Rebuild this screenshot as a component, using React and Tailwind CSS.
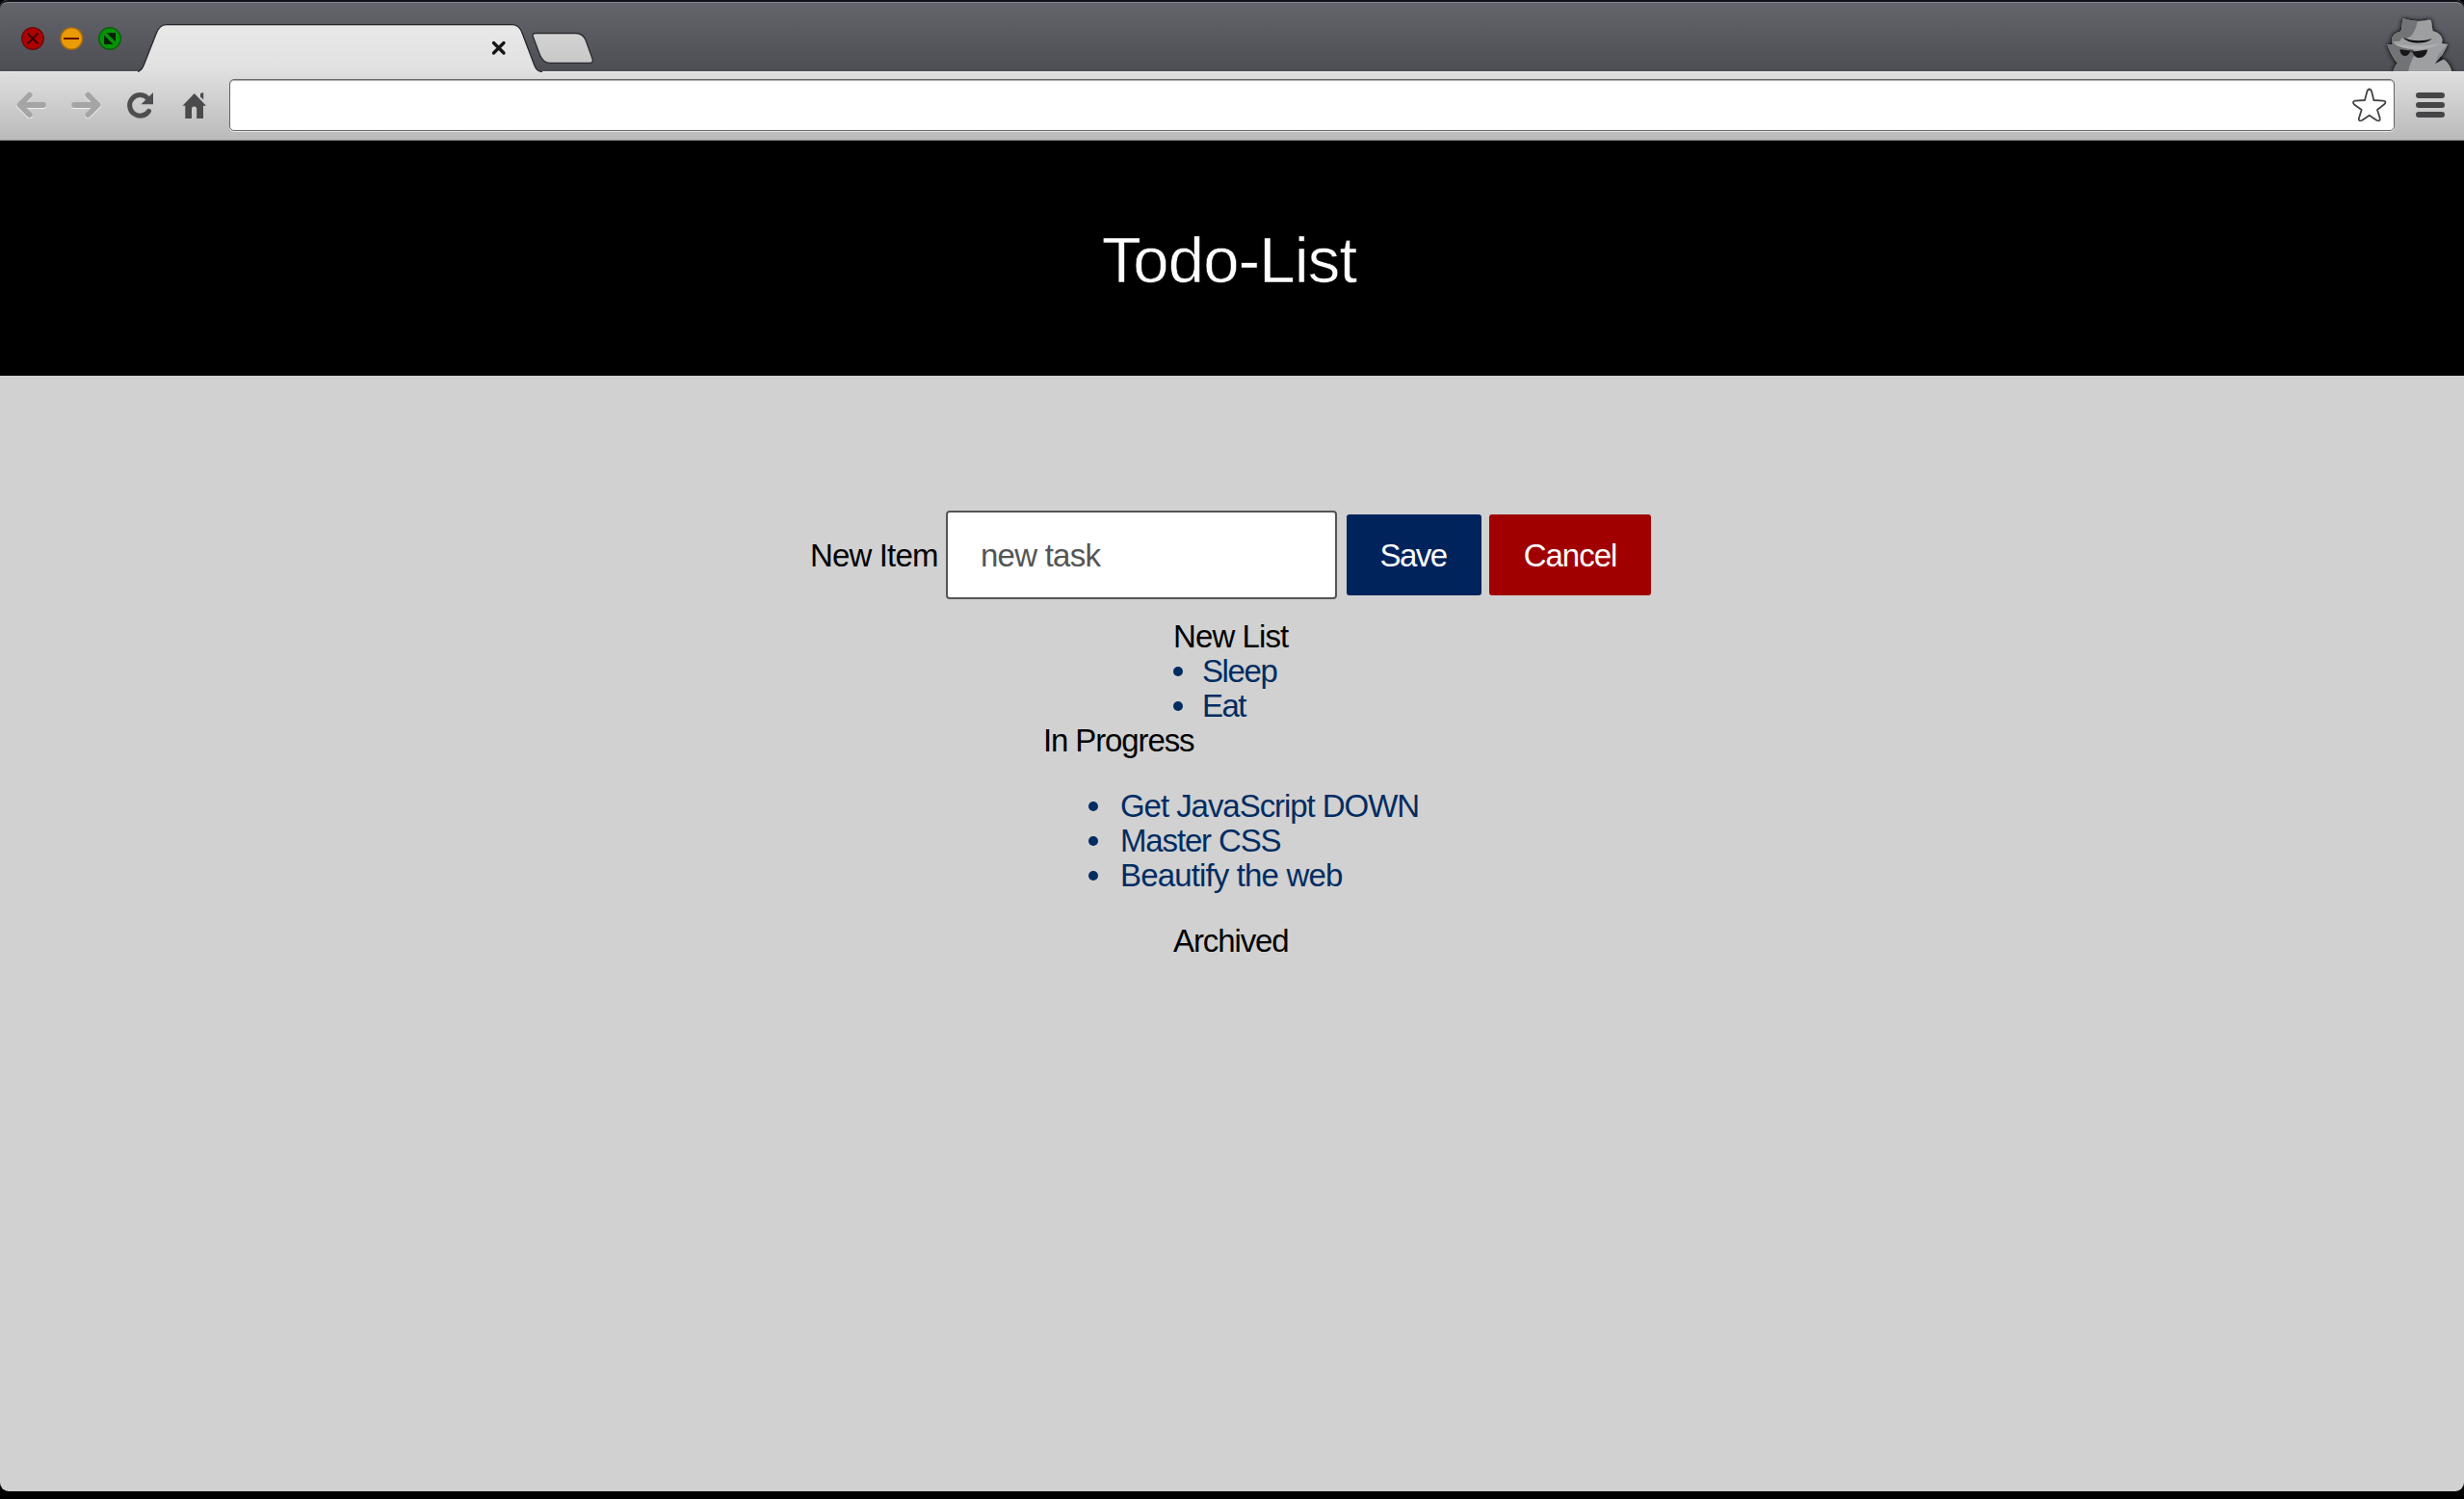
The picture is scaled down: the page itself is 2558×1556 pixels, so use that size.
import React from "react";

function WindowButtons() {
  return (
    <svg className="ml-5 mt-[26px] h-7 w-[110px] shrink-0" viewBox="20 26 110 28" fill="none">
      <circle cx="34" cy="40" r="11.3" fill="#ae0200" stroke="#700909" strokeWidth="1.4" />
      <path d="M28.5 34.5l11 11m0-11l-11 11" stroke="#390000" strokeWidth="2" />
      <circle cx="74.3" cy="40" r="11.3" fill="#e99b08" stroke="#a96c0e" strokeWidth="1.4" />
      <path d="M66 40h16" stroke="#691100" strokeWidth="2" />
      <circle cx="114" cy="40" r="11.3" fill="#079307" stroke="#0a5f0a" strokeWidth="1.4" />
      <path d="M110.5 34H120v9.5zM108 36.5V46h9.5z" fill="#002200" />
    </svg>
  );
}

function Tab() {
  return (
    <div className="relative h-[74px] w-[420px] shrink-0">
      <svg className="absolute left-0 top-0 h-[75px] w-[420px]" viewBox="143 0 420 75">
        <defs>
          <linearGradient id="tab" x1="0" y1="0" x2="0" y2="1">
            <stop offset="0" stopColor="#e9e9e9" />
            <stop offset="1" stopColor="#e0e0e0" />
          </linearGradient>
        </defs>
        <path
          d="M142 74.600C146.500 74 148 71 149.500 67L162.500 34C165 28 167.500 25.600 172.500 25.600H532C537.500 25.600 540 28.500 542 34L554.500 67C556 71 557.500 74 563 74.600V77H142Z"
          fill="url(#tab)"
          stroke="#26272b"
          strokeWidth="1.3"
        />
        <path d="M152 74.500H554" stroke="#e0e0e0" strokeWidth="2" />
        <path d="M512.500 44.500l10.500 10.500m0-10.500l-10.500 10.500" stroke="#161616" strokeWidth="3.300" strokeLinecap="round" />
      </svg>
    </div>
  );
}

function NewTab() {
  return (
    <svg className="-ml-[11px] mt-[33px] h-[34px] w-[66px] shrink-0" viewBox="552 33 66 34">
      <defs>
        <linearGradient id="newtab" x1="0" y1="0" x2="0" y2="1">
          <stop offset="0" stopColor="#d3d3d3" />
          <stop offset="1" stopColor="#c8c8c8" />
        </linearGradient>
      </defs>
      <path
        d="M556 34.500H598C603 34.500 606 37 608 41.500L615 61C616 64 615 65.400 612 65.400H571C566 65.400 562.500 62 560.500 57L553.500 38.500C552.600 36 553 34.500 556 34.500Z"
        fill="url(#newtab)"
        stroke="#2a2b2e"
        strokeWidth="1.300"
      />
    </svg>
  );
}

function Incognito() {
  return (
    <svg className="ml-auto mr-[4px] mt-[10px] h-16 w-[84px] shrink-0" viewBox="2470 10 84 64">
      <defs>
        <filter id="glow" x="-20%" y="-20%" width="140%" height="140%">
          <feDropShadow dx="0" dy="0" stdDeviation="1" floodColor="#000" floodOpacity="0.8" />
          <feDropShadow dx="0" dy="0" stdDeviation="2.6" floodColor="#000" floodOpacity="0.9" />
        </filter>
      </defs>
      <g filter="url(#glow)">
        <path
          d="M2494.300 20.500Q2494.500 19.200 2496 19.500C2505 22.500 2514 22.500 2521.500 20.500Q2523.700 20 2524 21.500L2525.500 32C2533 34 2537 39 2535 45L2541 46C2538 53 2534 60 2528 66L2536.500 61.500C2541 64 2544.500 69 2546 77H2484C2485 71.500 2487 67.500 2489 65.500C2485 61 2481 54 2478.300 46.300L2484 46C2481 40 2485 34 2492.700 32.500Z"
          fill="#9e9fa1"
        />
      </g>
      <path
        d="M2494.300 20.500Q2494.500 19.200 2496 19.500C2501 21 2505 22 2509.500 22C2508.500 29 2506 34 2503 37.500L2498 40L2494 38.500L2491 43H2484.500C2486 48 2496 50.500 2505 51L2507 56C2504 62 2501 68 2500 75H2484C2485 71 2487 67.500 2489 65.500C2485 61 2481 54 2478.300 46.300L2484 46C2481 40 2485 34 2492.700 32.500Z"
        fill="#727376"
      />
      <path d="M2484 44.500C2497 53.500 2521 53.500 2535 44.500C2526 48 2495 49 2484 44.500Z" fill="#aeafb1" />
      <path d="M2494 38.700C2504 43 2515 43.300 2525 40C2518 46.500 2501 46 2494 38.700Z" fill="#0e0e10" />
      <path d="M2491.500 51C2495 52 2499 52.500 2502.500 52C2501.500 56 2499.500 58 2496.500 58C2493.500 58 2491.500 55 2491.500 51ZM2504 53C2509 53.500 2514 52.500 2520 51.500C2519.500 57 2516 60 2511.500 60C2508 60 2505.500 57.500 2504 53Z" fill="#171719" />
      <path d="M2501 52L2506 52.500L2505 54.500L2502 54Z" fill="#3c3c3f" />
      <path d="M2541 46C2538 53 2534 60 2528 66L2531 57Z" fill="#8b8c8f" />
      <path d="M2534 58.500L2528 66L2536.500 61.500Z" fill="#1c1c1f" />
    </svg>
  );
}

function TabStrip() {
  return (
    <div className="flex h-[74px] items-start rounded-t-[8px] bg-linear-to-b from-[#65666d] to-[#4d4e54] shadow-[inset_0_2px_0_#10131b,inset_0_3px_0_#85868b]">
      <WindowButtons />
      <div className="w-[13px] shrink-0" />
      <Tab />
      <NewTab />
      <Incognito />
    </div>
  );
}

function Arrow({ className, edge }) {
  return (
    <svg className={className} viewBox="0 0 32 28" fill="none">
      <path d="M28 14H4M13.700 3.700L3.500 14L13.700 24.300" transform={edge} stroke="#ededed" strokeWidth="6" strokeLinecap="round" />
      <path d="M28 14H4.500M13.700 3.700L3.500 14L13.700 24.300" stroke="#a5a5a6" strokeWidth="5.800" strokeLinecap="round" strokeLinejoin="round" />
    </svg>
  );
}

function Toolbar() {
  return (
    <div className="flex h-[72px] items-center bg-linear-to-b from-[#dfdfdf] to-[#bababa] pb-[2px] shadow-[inset_0_1px_0_#eeeeee,inset_0_-1px_0_#8b8b8b]">
      <Arrow className="ml-[17px] h-7 w-8 shrink-0" edge="translate(0 1)" />
      <Arrow className="ml-6 h-7 w-8 shrink-0 rotate-180" edge="translate(0 -1)" />
      <svg className="ml-[25px] h-[30px] w-[32px] shrink-0" viewBox="130 94 32 30" fill="none">
        <path d="M154.500 115.300A10.800 10.800 0 1 1 153.500 102.200" stroke="#4e4e50" strokeWidth="5" strokeLinecap="round" />
        <path d="M159 96V108.200H146.500Z" fill="#4e4e50" />
      </svg>
      <svg className="ml-[25px] h-[30px] w-[30px] shrink-0" viewBox="187 94 30 30">
        <path d="M201.800 97L214 109.700H211V123H204.200V113.500Q204.200 110.500 201.500 110.500Q199 110.500 199 113.500V123H192.300V109.700H189.500Z" fill="#4b4b4d" />
        <path d="M208 97L211.200 96V103.500L208 100.200Z" fill="#4b4b4d" />
      </svg>
      <div className="ml-[21px] flex h-[54px] flex-1 items-center justify-end rounded-[5px] border border-[#68686a] bg-white pr-[6px] shadow-[inset_0_1px_1px_#a5a5a5,0_1px_0_#e8e8e8]">
        <svg className="h-9 w-[38px]" viewBox="2441 90 38 36" fill="white">
          <path
            d="M2457.500 93.500Q2459.700 89.500 2462 93.500L2464.300 103L2474 103.600Q2478 104.200 2475.500 107L2468 113L2470.700 121.500Q2471.200 125.500 2467.500 124L2459.700 118.800L2452 124Q2448 125.500 2449 121.500L2451.700 113L2444 107.500Q2441.500 104.200 2445 103.600L2455 103Z"
            stroke="#444447"
            strokeWidth="1.800"
            strokeLinejoin="round"
          />
        </svg>
      </div>
      <div className="ml-[22px] mr-5 flex w-[30px] shrink-0 flex-col gap-1">
        <div className="h-[6px] rounded-full bg-[#464648]" />
        <div className="h-[6px] rounded-full bg-[#464648]" />
        <div className="h-[6px] rounded-full bg-[#464648]" />
      </div>
    </div>
  );
}

function Item({ bullet, children, className }) {
  return (
    <li className="flex items-center text-[#002c62]">
      <span className={bullet} />
      <span className={className}>{children}</span>
    </li>
  );
}

export default function App() {
  return (
    <div className="flex h-[1556px] w-[2558px] flex-col overflow-hidden bg-black font-['Liberation_Sans',sans-serif] text-[33px] leading-9 whitespace-nowrap text-black">
      <TabStrip />
      <Toolbar />
      <header className="flex h-[244px] items-start justify-center bg-black pt-[86px]">
        <h1 className="mr-[6px] text-[67px] leading-[76px] font-normal tracking-[-0.8px] text-white [-webkit-text-stroke:0.6px_black]">Todo-List</h1>
      </header>
      <main className="h-[1158px] rounded-b-[9px] bg-[#d1d1d1] pt-[140px]">
        <form className="ml-[841px] flex items-center">
          <label className="w-[141px] pt-[2px] tracking-[-0.85px]">New Item</label>
          <input
            className="h-[92px] w-[406px] rounded-[4px] border-2 border-[#555] bg-white px-[34px] pt-[2px] tracking-[-0.75px] placeholder:text-[#555] placeholder:opacity-100"
            placeholder="new task"
          />
          <button type="button" className="ml-[10px] h-[84px] w-[140px] rounded-[3px] bg-[#00235c] pt-[2px] pr-[2px] tracking-[-1.5px] text-white">Save</button>
          <button type="button" className="ml-2 h-[84px] w-[168px] rounded-[3px] bg-[#a00000] pt-[2px] tracking-[-1px] text-white">Cancel</button>
        </form>
        <section className="mx-auto mt-[21px] w-[122px]">
          <h2 className="tracking-[-0.9px]">New List</h2>
          <ul>
            <Item bullet="mr-5 size-[10px] rounded-full bg-[#002c62]" className="tracking-[-1.4px]">Sleep</Item>
            <Item bullet="mr-5 size-[10px] rounded-full bg-[#002c62]" className="tracking-[-1.6px]">Eat</Item>
          </ul>
        </section>
        <section className="mx-auto w-[392px]">
          <h2 className="tracking-[-1.12px]">In Progress</h2>
          <ul className="my-8">
            <Item bullet="ml-[47px] mr-[23px] size-[10px] rounded-full bg-[#002c62]" className="tracking-[-1.05px]">Get JavaScript DOWN</Item>
            <Item bullet="ml-[47px] mr-[23px] size-[10px] rounded-full bg-[#002c62]" className="tracking-[-1.15px]">Master CSS</Item>
            <Item bullet="ml-[47px] mr-[23px] size-[10px] rounded-full bg-[#002c62]" className="tracking-[-0.85px]">Beautify the web</Item>
          </ul>
        </section>
        <section className="mx-auto w-[122px]">
          <h2 className="tracking-[-1.1px]">Archived</h2>
        </section>
      </main>
    </div>
  );
}
